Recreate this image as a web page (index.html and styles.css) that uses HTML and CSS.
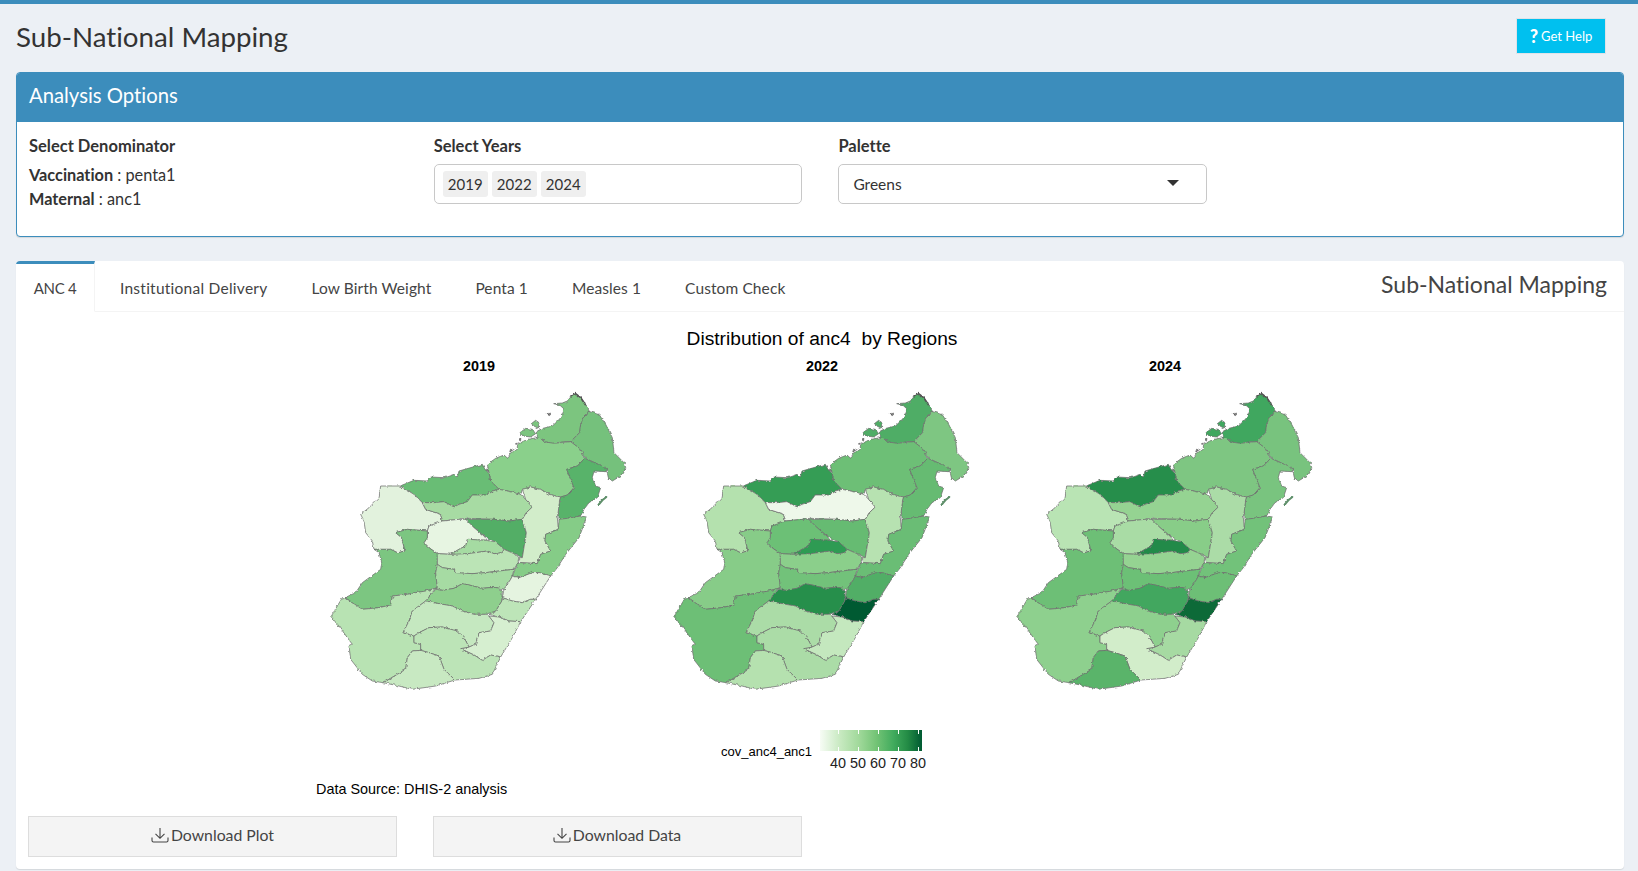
FILE: index.html
```
<!DOCTYPE html>
<html lang="en">
<head>
<meta charset="utf-8">
<title>Sub-National Mapping</title>
<link rel="stylesheet" href="styles.css">
</head>
<body>
<svg class="defs" aria-hidden="true">
  <defs>
    <filter id="rough" x="-5%" y="-5%" width="110%" height="110%">
      <feTurbulence type="fractalNoise" baseFrequency="0.1" numOctaves="2" seed="4" result="n"/>
      <feDisplacementMap in="SourceGraphic" in2="n" scale="9" xChannelSelector="R" yChannelSelector="G"/>
    </filter>
    <symbol id="mad" viewBox="0 0 960 960">
      <g filter="url(#rough)">
        <path class="reg r1" d="M603 155L620 142L640 145L650 158L635 168L612 165Z"/>
        <path class="reg r1" d="M637 128L650 118L660 125L658 142L645 135Z"/>
        <path class="speck" d="M683 100L695 96L692 104ZM575 204L581 208L572 212ZM601 176L606 172L604 183ZM591 183L596 186L590 190ZM497 268L525 262L512 270Z"/>
        <path class="sliver" d="M838 372L850 358L862 348"/>
        <path class="reg r1" d="M655 150L672 142L700 135L716 120L725 110L735 84L722 72L704 68L730 66L745 60L755 48L770 38L785 50L800 72L812 92L795 105L785 130L782 155L755 182L735 182L705 187L680 183L655 170Z"/>
        <path class="reg r2" d="M812 92L840 100L860 130L880 170L885 215L915 245L920 260L905 285L880 300L868 290L862 262L838 250L800 232L785 205L755 182L782 155L785 130L795 105Z"/>
        <path class="reg r3" d="M505 250L530 232L555 222L566 232L575 215L595 205L595 190L625 175L655 170L680 183L705 187L755 182L785 205L797 232L775 255L743 265L755 295L765 320L745 342L725 348L690 340L665 325L635 318L610 325L605 340L575 332L540 325L515 300L510 275Z"/>
        <path class="reg r4" d="M797 232L838 250L862 262L862 272L825 270L820 290L830 315L845 320L835 350L810 365L795 385L785 405L745 412L720 415L718 390L722 355L725 348L745 342L765 320L755 295L743 265L775 255Z"/>
        <path class="reg r5" d="M243 315L285 298L325 300L335 288L375 290L405 280L415 288L420 270L490 250L500 268L510 275L515 300L540 325L520 330L500 342L460 342L445 362L420 370L405 378L375 362L345 365L310 365L285 340L260 325Z"/>
        <path class="reg r6" d="M185 315L243 315L260 325L285 340L310 365L320 385L365 400L370 425L330 435L325 450L265 445L230 455L248 470L258 510L235 515L215 505L165 505L160 480L140 455L135 420L125 400L150 380L180 350Z"/>
        <path class="reg r7" d="M310 365L345 365L375 362L405 378L420 370L445 362L460 342L500 342L520 330L540 325L575 332L605 340L620 355L640 378L622 395L610 415L570 420L525 415L445 412L420 415L370 420L365 400L320 385Z"/>
        <path class="reg r8" d="M440 415L525 415L570 420L610 415L622 455L610 530L590 520L555 505L530 483L495 465L465 440Z"/>
        <path class="reg r9" d="M370 420L420 415L440 415L465 440L495 465L505 478L445 475L440 495L420 505L395 520L355 518L330 500L315 485L325 470L325 450L330 435Z"/>
        <path class="reg r10" d="M395 520L420 505L440 495L445 475L505 478L530 483L555 505L550 515L525 518L505 510L470 515L445 518L410 522Z"/>
        <path class="reg r11" d="M230 455L265 445L325 450L325 470L315 485L330 500L355 518L355 550L350 575L355 620L320 630L290 635L265 640L220 645L215 672L180 680L130 685L78 650L110 635L130 605L185 565L188 545L180 515L165 505L215 505L235 515L258 510L248 470Z"/>
        <path class="reg r12" d="M355 518L395 520L445 518L470 515L505 510L525 518L550 515L555 505L590 520L600 530L597 545L585 565L540 570L500 575L460 578L410 575L405 565L370 560L355 550Z"/>
        <path class="reg r13" d="M610 325L635 318L665 325L690 340L725 348L722 355L718 390L715 410L718 445L680 460L678 480L695 510L665 520L655 548L605 545L600 530L610 530L622 455L610 415L622 395L640 378L620 355Z"/>
        <path class="reg r14" d="M720 415L745 412L785 405L803 408L795 430L780 470L740 520L715 560L695 585L660 575L640 575L600 590L580 585L597 545L605 545L655 548L665 520L695 510L678 480L680 460L718 445Z"/>
        <path class="reg r15" d="M355 550L370 560L405 565L410 575L460 578L500 575L540 570L585 565L580 585L575 595L555 625L535 620L510 620L490 622L450 612L430 608L405 622L370 628L350 622L355 620L350 575Z"/>
        <path class="reg r16" d="M600 590L640 575L660 575L695 585L650 655L635 655L610 665L580 660L550 650L555 625L575 595L580 585Z"/>
        <path class="reg r18" d="M550 650L580 660L610 665L635 655L650 655L605 722L570 720L540 708L510 700L530 690L548 660Z"/>
        <path class="reg r17" d="M320 660L350 625L370 628L405 622L430 608L450 612L490 622L510 620L535 620L550 630L548 660L530 690L500 700L465 700L430 690L400 675L360 668Z"/>
        <path class="reg r19" d="M40 700L70 650L78 650L130 685L180 680L215 672L220 645L265 640L290 635L320 630L350 622L320 660L300 675L280 690L270 720L252 755L285 765L285 785L305 790L305 808L280 810L265 830L260 865L235 880L193 905L160 900L130 880L95 835L90 795L100 790L85 770L60 735L38 710Z"/>
        <path class="reg r20" d="M320 660L360 668L400 675L430 690L465 700L500 700L510 705L525 725L515 750L480 755L470 790L450 798L435 770L415 750L370 738L330 740L300 755L285 765L252 755L270 720L280 690L300 675Z"/>
        <path class="reg r21" d="M510 705L540 708L570 720L605 722L580 770L545 828L515 822L490 838L465 822L425 803L450 798L470 790L480 755L515 750L525 725Z"/>
        <path class="reg r22" d="M285 765L300 755L330 740L370 738L415 750L435 770L450 798L425 803L465 822L490 838L515 822L545 828L520 880L480 892L408 897L375 865L360 825L330 815L305 808L305 790L285 785Z"/>
        <path class="reg r23" d="M193 905L235 880L260 865L265 830L280 810L305 808L330 815L360 825L375 865L408 897L350 915L280 925L240 915Z"/>
        <path class="tip" d="M755 48L770 38L785 50L800 72"/>
      </g>
    </symbol>
  </defs>
</svg>

<div class="topbar"></div>
<header class="page-head">
  <h1 class="page-title">Sub-National Mapping</h1>
  <a class="help-btn"><span class="help-q">?</span>Get Help</a>
</header>

<main class="content">
  <section class="options">
    <h2 class="options-head">Analysis Options</h2>
    <div class="options-body">
      <div class="field">
        <div class="label">Select Denominator</div>
        <p class="denom"><b>Vaccination</b> : penta1</p>
        <p class="denom"><b>Maternal</b> : anc1</p>
      </div>
      <div class="field">
        <div class="label">Select Years</div>
        <div class="control">
          <span class="chip">2019</span><span class="chip">2022</span><span class="chip">2024</span>
        </div>
      </div>
      <div class="field">
        <div class="label">Palette</div>
        <div class="control control-select">Greens<span class="caret"></span></div>
      </div>
    </div>
  </section>

  <section class="tabbox">
    <nav class="tabs">
      <a class="tab active">ANC 4</a>
      <a class="tab">Institutional Delivery</a>
      <a class="tab">Low Birth Weight</a>
      <a class="tab">Penta 1</a>
      <a class="tab">Measles 1</a>
      <a class="tab">Custom Check</a>
      <span class="tabs-title">Sub-National Mapping</span>
    </nav>
    <div class="plot">
      <div class="plot-title">Distribution of anc4  by Regions</div>
      <div class="facets">
        <figure class="facet y2019">
          <figcaption>2019</figcaption>
          <svg class="map" viewBox="0 0 960 960"><use href="#mad"/></svg>
        </figure>
        <figure class="facet y2022">
          <figcaption>2022</figcaption>
          <svg class="map" viewBox="0 0 960 960"><use href="#mad"/></svg>
        </figure>
        <figure class="facet y2024">
          <figcaption>2024</figcaption>
          <svg class="map" viewBox="0 0 960 960"><use href="#mad"/></svg>
        </figure>
      </div>
      <div class="legend">
        <div class="legend-name">cov_anc4_anc1</div>
        <div class="legend-scale">
          <div class="legend-bar"><i></i><i></i><i></i><i></i><i></i></div>
          <div class="legend-ticks">40 50 60 70 80</div>
        </div>
      </div>
      <div class="source">Data Source: DHIS-2 analysis</div>
    </div>
    <div class="downloads">
      <a class="dl-btn"><svg class="dl-icon" viewBox="0 0 18 16"><path d="M9 1V11M4.5 6.8L9 11.3L13.500 6.800M1 10.500V13.500Q1 15 2.500 15H15.500Q17 15 17 13.500V10.500"/></svg>Download Plot</a>
      <a class="dl-btn"><svg class="dl-icon" viewBox="0 0 18 16"><path d="M9 1V11M4.5 6.8L9 11.3L13.500 6.800M1 10.500V13.500Q1 15 2.500 15H15.500Q17 15 17 13.500V10.500"/></svg>Download Data</a>
    </div>
  </section>
</main>
</body>
</html>
```
FILE: styles.css
```
* { box-sizing: border-box; }
html, body { margin: 0; height: 100%; }
body {
  background: #ecf0f5;
  color: #333;
  font-family: Lato, "Noto Sans", sans-serif;
  font-size: 15px;
  font-variant-ligatures: none;
  overflow: hidden;
}
.defs { position: absolute; width: 0; height: 0; }

.topbar { height: 4px; background: #3c8dbc; }
.page-head {
  height: 68px;
  display: flex;
  justify-content: space-between;
  padding: 14px 32px 0 16px;
}
.page-title {
  margin: 1px 0 0;
  font-size: 27.700px;
  font-weight: 400;
  line-height: 36px;
}
.help-btn {
  width: 90px;
  height: 36px;
  background: #00c0ef;
  border: 1px solid #dfe3e8;
  color: #fff;
  font-size: 13px;
  display: flex;
  align-items: center;
  justify-content: center;
}
.help-q { font-size: 18px; font-weight: 900; margin-right: 3px; }

.content { padding: 0 14px 0 16px; }

.options {
  height: 165px;
  background: #fff;
  border: 1px solid #3c8dbc;
  border-radius: 4px;
  box-shadow: 0 1px 1px rgba(0,0,0,.1);
  overflow: hidden;
}
.options-head {
  margin: 0;
  height: 49px;
  background: #3c8dbc;
  color: #fff;
  font-size: 20.300px;
  font-weight: 400;
  line-height: 44px;
  padding-left: 12px;
}
.options-body {
  display: grid;
  grid-template-columns: repeat(4, 369px);
  column-gap: 35.700px;
  padding: 13px 12px 0;
}
.label { font-weight: 700; font-size: 16.500px; line-height: 22px; margin-bottom: 7px; }
.denom { margin: 0; font-size: 16.300px; line-height: 24px; }
.label + .denom { margin-top: -1px; }
.denom b { font-weight: 700; }
.control {
  height: 40px;
  width: 368px;
  border: 1px solid #c8c8c8;
  border-radius: 5px;
  background: #fff;
  padding: 6px 8px;
  display: flex;
  align-items: center;
  gap: 4px;
  font-size: 15px;
}
.chip {
  width: 45px;
  height: 26px;
  line-height: 26px;
  text-align: center;
  background: #efefef;
  border-radius: 3px;
  color: #333;
}
.control-select { position: relative; padding-left: 14px; width: 369px; font-size: 15.500px; }
.caret {
  position: absolute;
  right: 27px;
  top: 15px;
  border-left: 6px solid transparent;
  border-right: 6px solid transparent;
  border-top: 6px solid #333;
}

.tabbox {
  margin-top: 24px;
  height: 608px;
  background: #fff;
  border-radius: 4px;
  box-shadow: 0 1px 1px rgba(0,0,0,.1);
  overflow: hidden;
}
.tabs {
  height: 51px;
  display: flex;
  align-items: stretch;
  border-bottom: 1px solid #f4f4f4;
  color: #444;
  font-size: 15.500px;
  letter-spacing: .1px;
  position: relative;
}
.tab {
  padding: 15px 0 0;
  margin-right: 44px;
  line-height: 24px;
  white-space: nowrap;
}
.tab:nth-child(2) { letter-spacing: .25px; }
.tab.active {
  width: 79px;
  text-align: center;
  margin-right: 25px;
  padding: 12px 0 0;
  background: #fff;
  border-top: 3px solid #3c8dbc;
  border-right: 1px solid #f4f4f4;
  height: 51px;
  border-bottom: 1px solid #fff;
  font-size: 15px;
  letter-spacing: -.3px;
}
.tabs-title {
  margin-left: auto;
  padding: 8px 17px 0 0;
  font-size: 23px;
  line-height: 30px;
  color: #444;
  letter-spacing: 0;
}

.plot {
  font-family: "Liberation Sans", Arial, sans-serif;
  color: #000;
  width: 1029px;
  margin-left: 291.500px;
}
.plot-title {
  font-size: 19.200px;
  line-height: 22px;
  height: 22px;
  margin-top: 16px;
  text-align: center;
  white-space: pre;
}
.facets { display: grid; grid-template-columns: repeat(3, 343px); }
.facet { margin: 0; text-align: center; }
.facet figcaption { font-size: 14.400px; font-weight: 700; line-height: 18px; margin-top: 6.500px; height: 18px; }
.map { display: block; width: 320px; height: 320px; margin: 6px auto 0; filter: blur(.35px); }

.reg { stroke: #6c6c6c; stroke-width: 2.200; stroke-linejoin: round; }
.speck { fill: #555; stroke: #777; stroke-width: 2; }
.sliver { fill: none; stroke: #5f8f6a; stroke-width: 6; stroke-linecap: round; }
.tip { fill: none; stroke: #555; stroke-width: 5; }
.r1{fill:var(--r1)}.r2{fill:var(--r2)}.r3{fill:var(--r3)}.r4{fill:var(--r4)}.r5{fill:var(--r5)}.r6{fill:var(--r6)}
.r7{fill:var(--r7)}.r8{fill:var(--r8)}.r9{fill:var(--r9)}.r10{fill:var(--r10)}.r11{fill:var(--r11)}.r12{fill:var(--r12)}
.r13{fill:var(--r13)}.r14{fill:var(--r14)}.r15{fill:var(--r15)}.r16{fill:var(--r16)}.r17{fill:var(--r17)}.r18{fill:var(--r18)}
.r19{fill:var(--r19)}.r20{fill:var(--r20)}.r21{fill:var(--r21)}.r22{fill:var(--r22)}.r23{fill:var(--r23)}

.y2019 {
  --r1:#7bc57f;--r2:#75c17c;--r3:#8ad08b;--r4:#58b36a;--r5:#69bd74;--r6:#e2f2dd;--r7:#a7dba3;--r8:#52ae66;
  --r9:#e7f5e2;--r10:#a5dba2;--r11:#7cc681;--r12:#bbe4b6;--r13:#d2edca;--r14:#85cc87;--r15:#a6dba3;--r16:#e5f4e0;
  --r17:#8ecf8d;--r18:#bde5b8;--r19:#b8e3b3;--r20:#c5e8c0;--r21:#d6efd0;--r22:#bce4b7;--r23:#c8e9c2;
}
.y2022 {
  --r1:#50ad66;--r2:#7ec682;--r3:#6dbf76;--r4:#66bb72;--r5:#349d55;--r6:#b4e1ae;--r7:#eef8ea;--r8:#66bb72;
  --r9:#6cc076;--r10:#2f9b53;--r11:#87cc88;--r12:#8bcf8b;--r13:#b7e2b1;--r14:#6abd74;--r15:#72c27a;--r16:#51ae66;
  --r17:#278f4c;--r18:#005a32;--r19:#6dbf76;--r20:#abdca7;--r21:#c4e8be;--r22:#abdca7;--r23:#b5e1af;
}
.y2024 {
  --r1:#40a75e;--r2:#78c37e;--r3:#7ec682;--r4:#79c47f;--r5:#288e4c;--r6:#b9e4b4;--r7:#95d392;--r8:#88cd88;
  --r9:#a9dca5;--r10:#228a49;--r11:#6dbf76;--r12:#95d392;--r13:#abdca7;--r14:#72c27a;--r15:#6cc076;--r16:#6dbf76;
  --r17:#42a75f;--r18:#0d6a38;--r19:#8ed08e;--r20:#8ed08e;--r21:#a6daa2;--r22:#d2edca;--r23:#5ab46b;
}

.legend { display: flex; margin: 29.500px 0 0 413.500px; height: 42px; }
.legend-name { font-size: 13px; line-height: 16px; margin-top: 14px; width: 99px; white-space: nowrap; }
.legend-bar {
  width: 102px;
  height: 21px;
  background: linear-gradient(90deg, #f7fcf5 0%, #c7e9c0 20%, #a1d99b 38%, #74c476 55%, #41ab5d 72%, #238b45 86%, #005a32 100%);
  position: relative;
}
.legend-bar i { position: absolute; top: 0; bottom: 0; width: 1px; background: linear-gradient(#fff 4px, transparent 4px, transparent 17px, #fff 17px); }
.legend-bar i:nth-child(1) { left: 18px; }
.legend-bar i:nth-child(2) { left: 38px; }
.legend-bar i:nth-child(3) { left: 58px; }
.legend-bar i:nth-child(4) { left: 78px; }
.legend-bar i:nth-child(5) { left: 98px; }
.legend-ticks { font-size: 14.400px; line-height: 16px; margin: 4px 0 0 10px; white-space: nowrap; color: #222; }
.source { font-size: 14.400px; line-height: 18px; margin: 8px 0 0 8.500px; }

.downloads { display: flex; gap: 35.500px; padding: 18px 12px 0; }
.dl-btn {
  width: 369px;
  height: 41px;
  padding-bottom: 4px;
  background: #f4f4f4;
  border: 1px solid #ddd;
  color: #444;
  font-size: 15.800px;
  display: flex;
  align-items: center;
  justify-content: center;
}
.dl-icon { width: 18px; height: 16px; margin-right: 2px; fill: none; stroke: #444; stroke-width: 1.100; }
```
